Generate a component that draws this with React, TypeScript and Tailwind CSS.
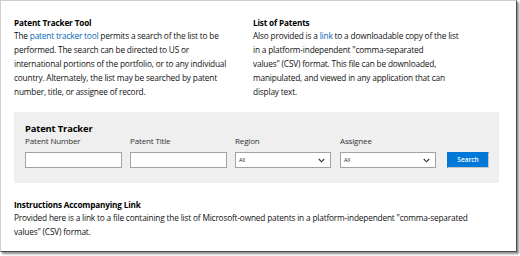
import React from 'react';

const fields = [
  { label: 'Patent Number', kind: 'input' },
  { label: 'Patent Title', kind: 'input' },
  { label: 'Region', kind: 'select' },
  { label: 'Assignee', kind: 'select' },
];

const Chevron = () => (
  <svg width="7" height="5" viewBox="0 0 7 5" className="shrink-0">
    <path d="M0.8 1 L3.5 3.8 L6.2 1" fill="none" stroke="#333" strokeWidth="1.1" />
  </svg>
);

export default function App() {
  return (
    <div className="w-[520px] h-[256px] bg-white" style={{ fontFamily: '"Open Sans", "Noto Sans", sans-serif' }}>
      <div className="w-[517px] h-[252px] border-l border-t border-r border-b border-l-[#cfcfcf] border-t-[#cfcfcf] border-r-[#4a4a4a] border-b-[#4a4a4a] shadow-[2px_2px_2px_rgba(0,0,0,0.45)] pl-[13px] pt-[15px] text-[#111]">
        <div className="grid grid-cols-[239px_240px]">
          <section>
            <h2 className="text-[8.2px] tracking-[-0.15px] font-bold leading-[13px] text-black">Patent Tracker Tool</h2>
            <p className="text-[8.3px] tracking-[-0.18px] leading-[14px]">
              The <a className="text-[#0067b8]">patent tracker tool</a> permits a search of the list to be<br />
              performed. The search can be directed to US or<br />
              international portions of the portfolio, or to any individual<br />
              country. Alternately, the list may be searched by patent<br />
              number, title, or assignee of record.
            </p>
          </section>
          <section>
            <h2 className="text-[8.2px] tracking-[-0.15px] font-bold leading-[13px] text-black">List of Patents</h2>
            <p className="text-[8.3px] tracking-[-0.18px] leading-[14px]">
              Also provided is a <a className="text-[#0067b8]">link</a> to a downloadable copy of the list<br />
              in a platform-independent "comma-separated<br />
              values" (CSV) format. This file can be downloaded,<br />
              manipulated, and viewed in any application that can<br />
              display text.
            </p>
          </section>
        </div>

        <div className="mt-[13px] w-[485px] h-[71px] bg-[#efefef] pl-[11px] pt-[11px]">
          <h3 className="text-[9.4px] tracking-[-0.15px] font-bold leading-[12px] text-black">Patent Tracker</h3>
          <div className="flex items-end">
            {fields.map((f) => (
              <div key={f.label} className="w-[105px]">
                <div className="text-[8px] tracking-[-0.15px] leading-[12px] text-[#333] mb-[5px]">{f.label}</div>
                {f.kind === 'input' ? (
                  <div className="w-[97px] h-[16px] bg-white border border-[#a3a3a3]" />
                ) : (
                  <div className="w-[96px] h-[16px] bg-white border border-[#a3a3a3] flex items-center justify-between pl-[3px] pr-[5px]">
                    <span className="text-[5.5px] text-[#222]">All</span>
                    <Chevron />
                  </div>
                )}
              </div>
            ))}
            <button className="ml-[2px] w-[42px] h-[16px] bg-[#0078d7] border border-r-[#c8c8c8] border-b-[#c8c8c8] border-l-[#0078d7] border-t-[#0078d7] text-white text-[6.5px] font-semibold leading-none">
              Search
            </button>
          </div>
        </div>

        <section className="mt-[15px]">
          <h2 className="text-[8.2px] tracking-[-0.15px] font-bold leading-[13px] text-black">Instructions Accompanying Link</h2>
          <p className="text-[8.3px] tracking-[-0.18px] leading-[14px]">
            Provided here is a link to a file containing the list of Microsoft-owned patents in a platform-independent "comma-separated<br />
            values" (CSV) format.
          </p>
        </section>
      </div>
    </div>
  );
}
